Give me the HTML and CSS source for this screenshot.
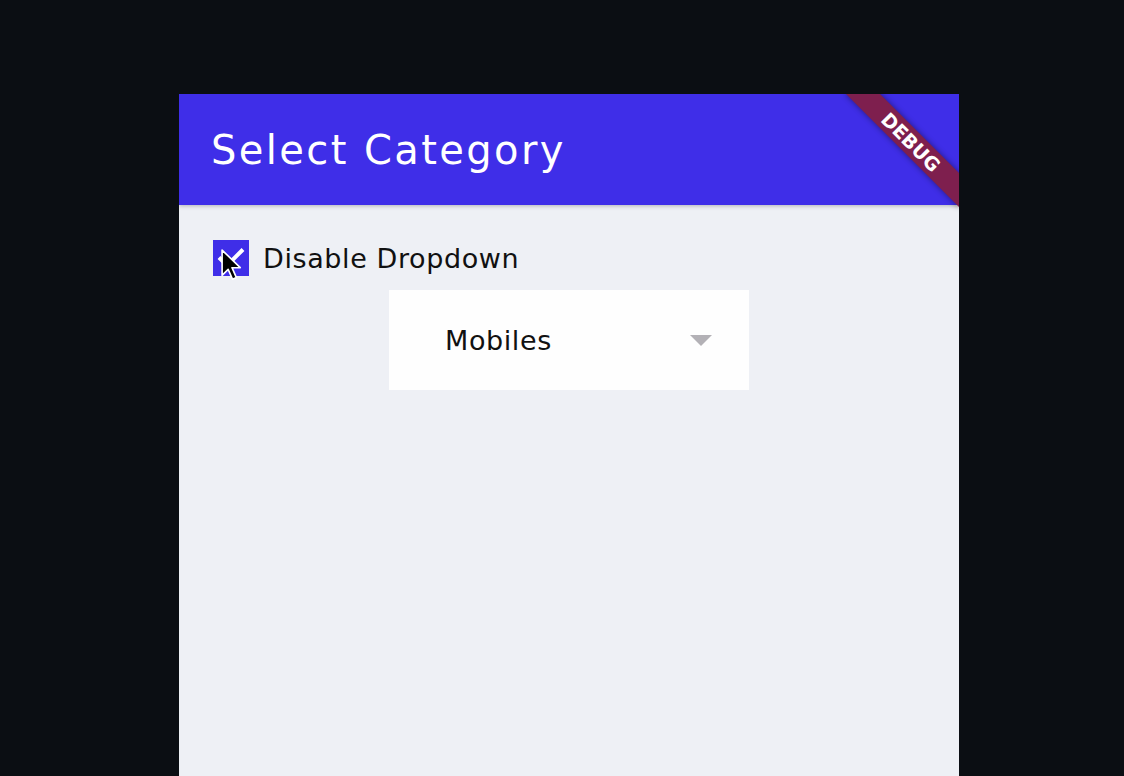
FILE: index.html
```html
<!DOCTYPE html>
<html>
<head>
<meta charset="utf-8">
<link rel="stylesheet" href="styles.css">
</head>
<body>
<div class="stage">
  <div class="phone">
    <header class="appbar">
      <h1 class="title">Select Category</h1>
    </header>
    <main class="content">
      <label class="check-row">
        <span class="checkbox">
          <svg viewBox="0 0 36 36" width="36" height="36">
            <path d="M6 17.5 L14 25.5 L30 9.5" fill="none" stroke="#fff" stroke-width="4"/>
          </svg>
        </span>
        <span class="check-label">Disable Dropdown</span>
      </label>
      <div class="dropdown">
        <span class="dropdown-value">Mobiles</span>
        <span class="caret"></span>
      </div>
    </main>
    <svg class="cursor" viewBox="0 0 20 30" width="22" height="33">
      <path d="M1 1 L1 24 L6.5 18.5 L10.5 27.5 L14 26 L10 17 L17.5 17 Z" fill="#000" stroke="#fff" stroke-width="1.5" stroke-linejoin="round"/>
    </svg>
    <div class="banner">DEBUG</div>
  </div>
</div>
</body>
</html>
```
FILE: styles.css
```css
html, body {
  margin: 0;
  padding: 0;
  background: #0b0e13;
  height: 776px;
  overflow: hidden;
}
.stage {
  padding: 94px 0 0 179px;
}
.phone {
  position: relative;
  width: 780px;
  height: 682px;
  background: #eef0f5;
  overflow: hidden;
  font-family: "DejaVu Sans", "Noto Sans", sans-serif;
}
.appbar {
  height: 111px;
  background: #3f2ee8;
  display: flex;
  align-items: center;
  padding-left: 32px;
  box-shadow: 0 1px 4px rgba(0,0,0,0.25);
  position: relative;
  z-index: 1;
}
.title {
  margin: 0;
  color: #fff;
  font-weight: 400;
  font-size: 40px;
  letter-spacing: 2.4px;
}
.content {
  padding-top: 35px;
}
.check-row {
  display: flex;
  align-items: center;
  padding-left: 34px;
  height: 36px;
}
.checkbox {
  width: 36px;
  height: 36px;
  background: #3f2ee8;
  display: block;
}
.checkbox svg { display: block; }
.check-label {
  margin-left: 14px;
  font-size: 27px;
  letter-spacing: 0.6px;
  color: #111;
}
.dropdown {
  margin: 14px auto 0;
  width: 360px;
  height: 100px;
  background: #fefefe;
  display: flex;
  align-items: center;
  box-sizing: border-box;
  padding: 0 37px 0 56px;
}
.dropdown-value {
  flex: 1;
  font-size: 27px;
  letter-spacing: 0.6px;
  color: #111;
}
.caret {
  width: 0;
  height: 0;
  border-left: 11px solid transparent;
  border-right: 11px solid transparent;
  border-top: 11px solid #b3b1b6;
}
.cursor {
  position: absolute;
  left: 42px;
  top: 155px;
  z-index: 3;
}
.banner {
  position: absolute;
  top: 36px;
  right: -32px;
  width: 160px;
  height: 24px;
  transform: rotate(45deg);
  background: #7e1f4e;
  box-shadow: 0 0 6px rgba(0,0,0,0.45);
  color: #fff;
  font-family: "DejaVu Sans", sans-serif;
  font-weight: bold;
  font-size: 19px;
  line-height: 24px;
  text-align: center;
  z-index: 2;
}
```
